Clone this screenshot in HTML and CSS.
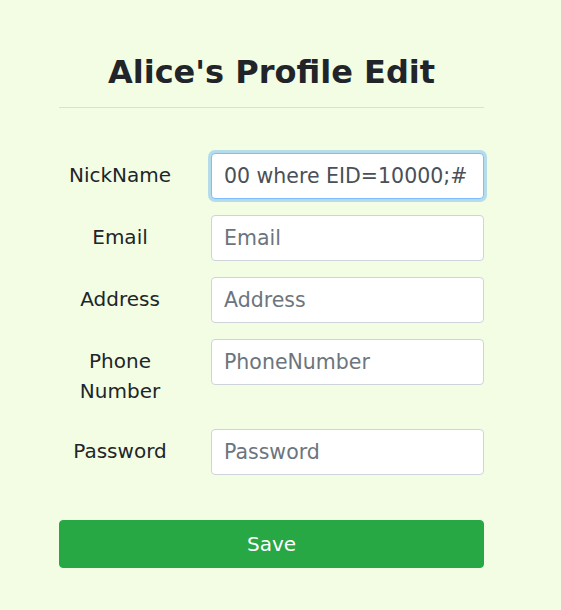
FILE: index.html
```html
<!DOCTYPE html>
<html>
<head>
<meta charset="utf-8">
<link rel="stylesheet" href="styles.css">
</head>
<body>
<div class="page">
  <h2 class="title">Alice's Profile Edit</h2>
  <hr class="rule">
  <form class="form">
    <div class="row">
      <label class="label">NickName</label>
      <input class="input focus" type="text" value="00 where EID=10000;#">
    </div>
    <div class="row">
      <label class="label">Email</label>
      <input class="input" type="text" placeholder="Email">
    </div>
    <div class="row">
      <label class="label">Address</label>
      <input class="input" type="text" placeholder="Address">
    </div>
    <div class="row">
      <label class="label">Phone Number</label>
      <input class="input" type="text" placeholder="PhoneNumber">
    </div>
    <div class="row">
      <label class="label">Password</label>
      <input class="input" type="text" placeholder="Password">
    </div>
    <button class="save" type="button">Save</button>
  </form>
</div>
</body>
</html>
```
FILE: styles.css
```css
html, body {
  margin: 0;
  padding: 0;
  background: #f2fde4;
  font-family: "DejaVu Sans", sans-serif;
  color: #212529;
}
.page {
  width: 425px;
  margin-left: 59px;
  padding-top: 53px;
}
.title {
  margin: 0;
  font-size: 32px;
  line-height: 38px;
  font-weight: bold;
  text-align: center;
}
.rule {
  margin: 16px 0 0;
  border: 0;
  border-top: 1px solid rgba(0,0,0,0.1);
}
.form {
  margin-top: 45px;
}
.row {
  display: grid;
  grid-template-columns: 122px 273px;
  column-gap: 30px;
  align-items: start;
  margin-bottom: 16px;
}
.label {
  font-size: 20px;
  line-height: 30px;
  padding: 7px 0;
  text-align: center;
}
.input {
  box-sizing: border-box;
  width: 273px;
  height: 46px;
  padding: 0 12px;
  font-family: "DejaVu Sans", sans-serif;
  font-size: 20.5px;
  color: #495057;
  background: #fff;
  border: 1px solid #ced4da;
  border-radius: 4px;
  outline: none;
}
.input::placeholder {
  color: #6c757d;
}
.input.focus {
  border-color: #80bdff;
  box-shadow: 0 0 0 3px rgba(0,123,255,0.25);
}
.save {
  display: block;
  width: 425px;
  height: 48px;
  margin-top: 45px;
  font-family: "DejaVu Sans", sans-serif;
  font-size: 20px;
  color: #fff;
  background: #28a745;
  border: 1px solid #28a745;
  border-radius: 4px;
}
```
